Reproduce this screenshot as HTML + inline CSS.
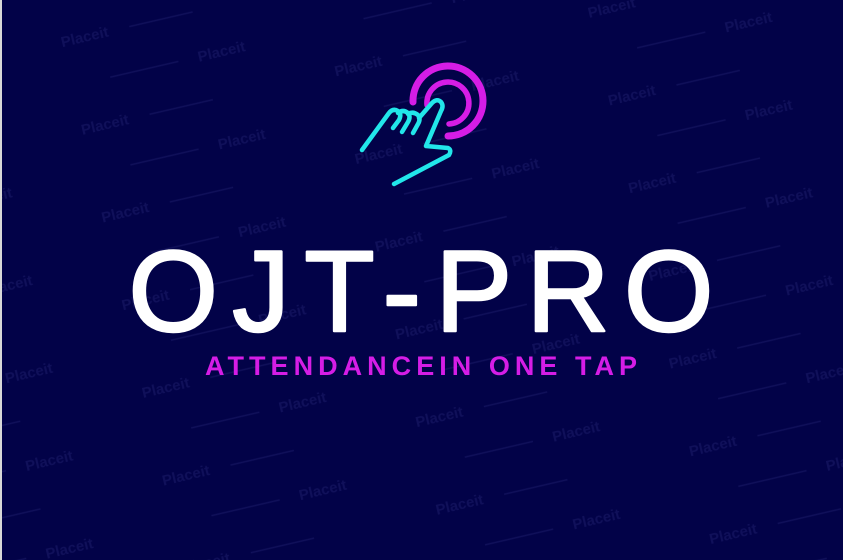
<!DOCTYPE html>
<html><head><meta charset="utf-8"><style>
html,body{margin:0;padding:0;background:#020248;}
body{width:843px;height:560px;overflow:hidden;position:relative;}
svg{position:absolute;left:0;top:0;}
</style></head><body>
<svg width="843" height="560" viewBox="0 0 843 560">
<defs>
<pattern id="wm" width="260" height="90" patternUnits="userSpaceOnUse" patternTransform="rotate(-13) translate(10,30)">
<text x="40" y="30" font-family="Liberation Sans, sans-serif" font-weight="bold" font-size="15" fill="#10105a">Placeit</text>
<line x1="110" y1="25" x2="175" y2="25" stroke="#10105a" stroke-width="1.5"/>
<text x="170" y="75" font-family="Liberation Sans, sans-serif" font-weight="bold" font-size="15" fill="#10105a">Placeit</text>
<line x1="80" y1="70" x2="150" y2="70" stroke="#10105a" stroke-width="1.5"/>
</pattern>
</defs>
<rect width="843" height="560" fill="#020248"/>
<rect width="843" height="560" fill="url(#wm)"/>
<rect x="0" y="0" width="2" height="560" fill="#d8d8d8"/>
<g fill="none" stroke="#d51de6" stroke-linecap="round">
<path d="M413,102 A35,35 0 1 1 448,136" stroke-width="7"/>
<path d="M427,105 A21,21 0 1 1 449,124" stroke-width="5.5"/>
</g>
<g fill="none" stroke="#22e6ea" stroke-width="4.5" stroke-linecap="round" stroke-linejoin="round">
<path d="M362,150 L389,113 Q393,108 398,111 Q402,114 399,120 L393,128"/>
<path d="M398,113 Q403,109 408,113 Q411,117 408,122 L402,132"/>
<path d="M408,114 Q413,111 418,115 Q421,119 418,124 L413,133"/>
<path d="M419,118 L432,103 Q437,98 441,102 Q444,106 441,111 L426,146 L448,148 Q452,150 449,155 L394,184"/>
</g>
<text x="421" y="331" text-anchor="middle" font-family="Liberation Sans, sans-serif" font-size="115" fill="#fff" stroke="#fff" stroke-width="2.5" stroke-linejoin="round" textLength="585" lengthAdjust="spacing">OJT-PRO</text>
<text x="421" y="375" text-anchor="middle" font-family="Liberation Sans, sans-serif" font-weight="bold" font-size="27" fill="#d51de6" textLength="432" lengthAdjust="spacing">ATTENDANCEIN ONE TAP</text>
</svg>
</body></html>
